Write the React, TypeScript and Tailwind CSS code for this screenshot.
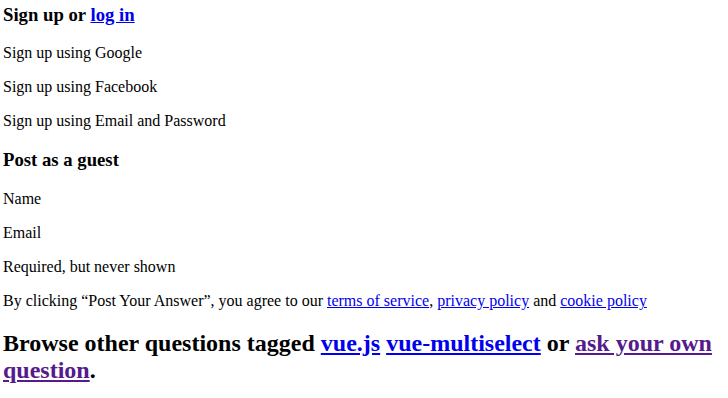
const link = "text-[#0000ee] underline";
const visited = "text-[#551a8b] underline";

export default function App() {
  return (
    <div className="px-[3px] bg-white text-black font-['Liberation_Serif','Times_New_Roman',serif] text-[16px]">
      <h3 className="mt-[4px] text-[18.72px] font-bold leading-[21px]">
        Sign up or <a href="#" className={link}>log in</a>
      </h3>
      <p className="mt-[19px] leading-[18px]">Sign up using Google</p>
      <p className="mt-[16px] leading-[18px]">Sign up using Facebook</p>
      <p className="mt-[16px] leading-[18px]">Sign up using Email and Password</p>

      <h3 className="mt-[19px] text-[18.72px] font-bold leading-[21px]">Post as a guest</h3>
      <p className="mt-[20px] leading-[18px]">Name</p>
      <p className="mt-[16px] leading-[18px]">Email</p>
      <p className="mt-[16px] leading-[18px]">Required, but never shown</p>
      <p className="mt-[16px] leading-[18px]">
        By clicking “Post Your Answer”, you agree to our{" "}
        <a href="#" className={link}>terms of service</a>,{" "}
        <a href="#" className={link}>privacy policy</a> and{" "}
        <a href="#" className={link}>cookie policy</a>
      </p>

      {/* the visited link wraps onto a second line, as in the reference */}
      <h2 className="mt-[20px] text-[24px] font-bold leading-[27px]">
        Browse other questions tagged <a href="#" className={link}>vue.js</a>{" "}
        <a href="#" className={link}>vue-multiselect</a> or{" "}
        <a href="#" className={visited}>ask your own question</a>.
      </h2>
    </div>
  );
}
